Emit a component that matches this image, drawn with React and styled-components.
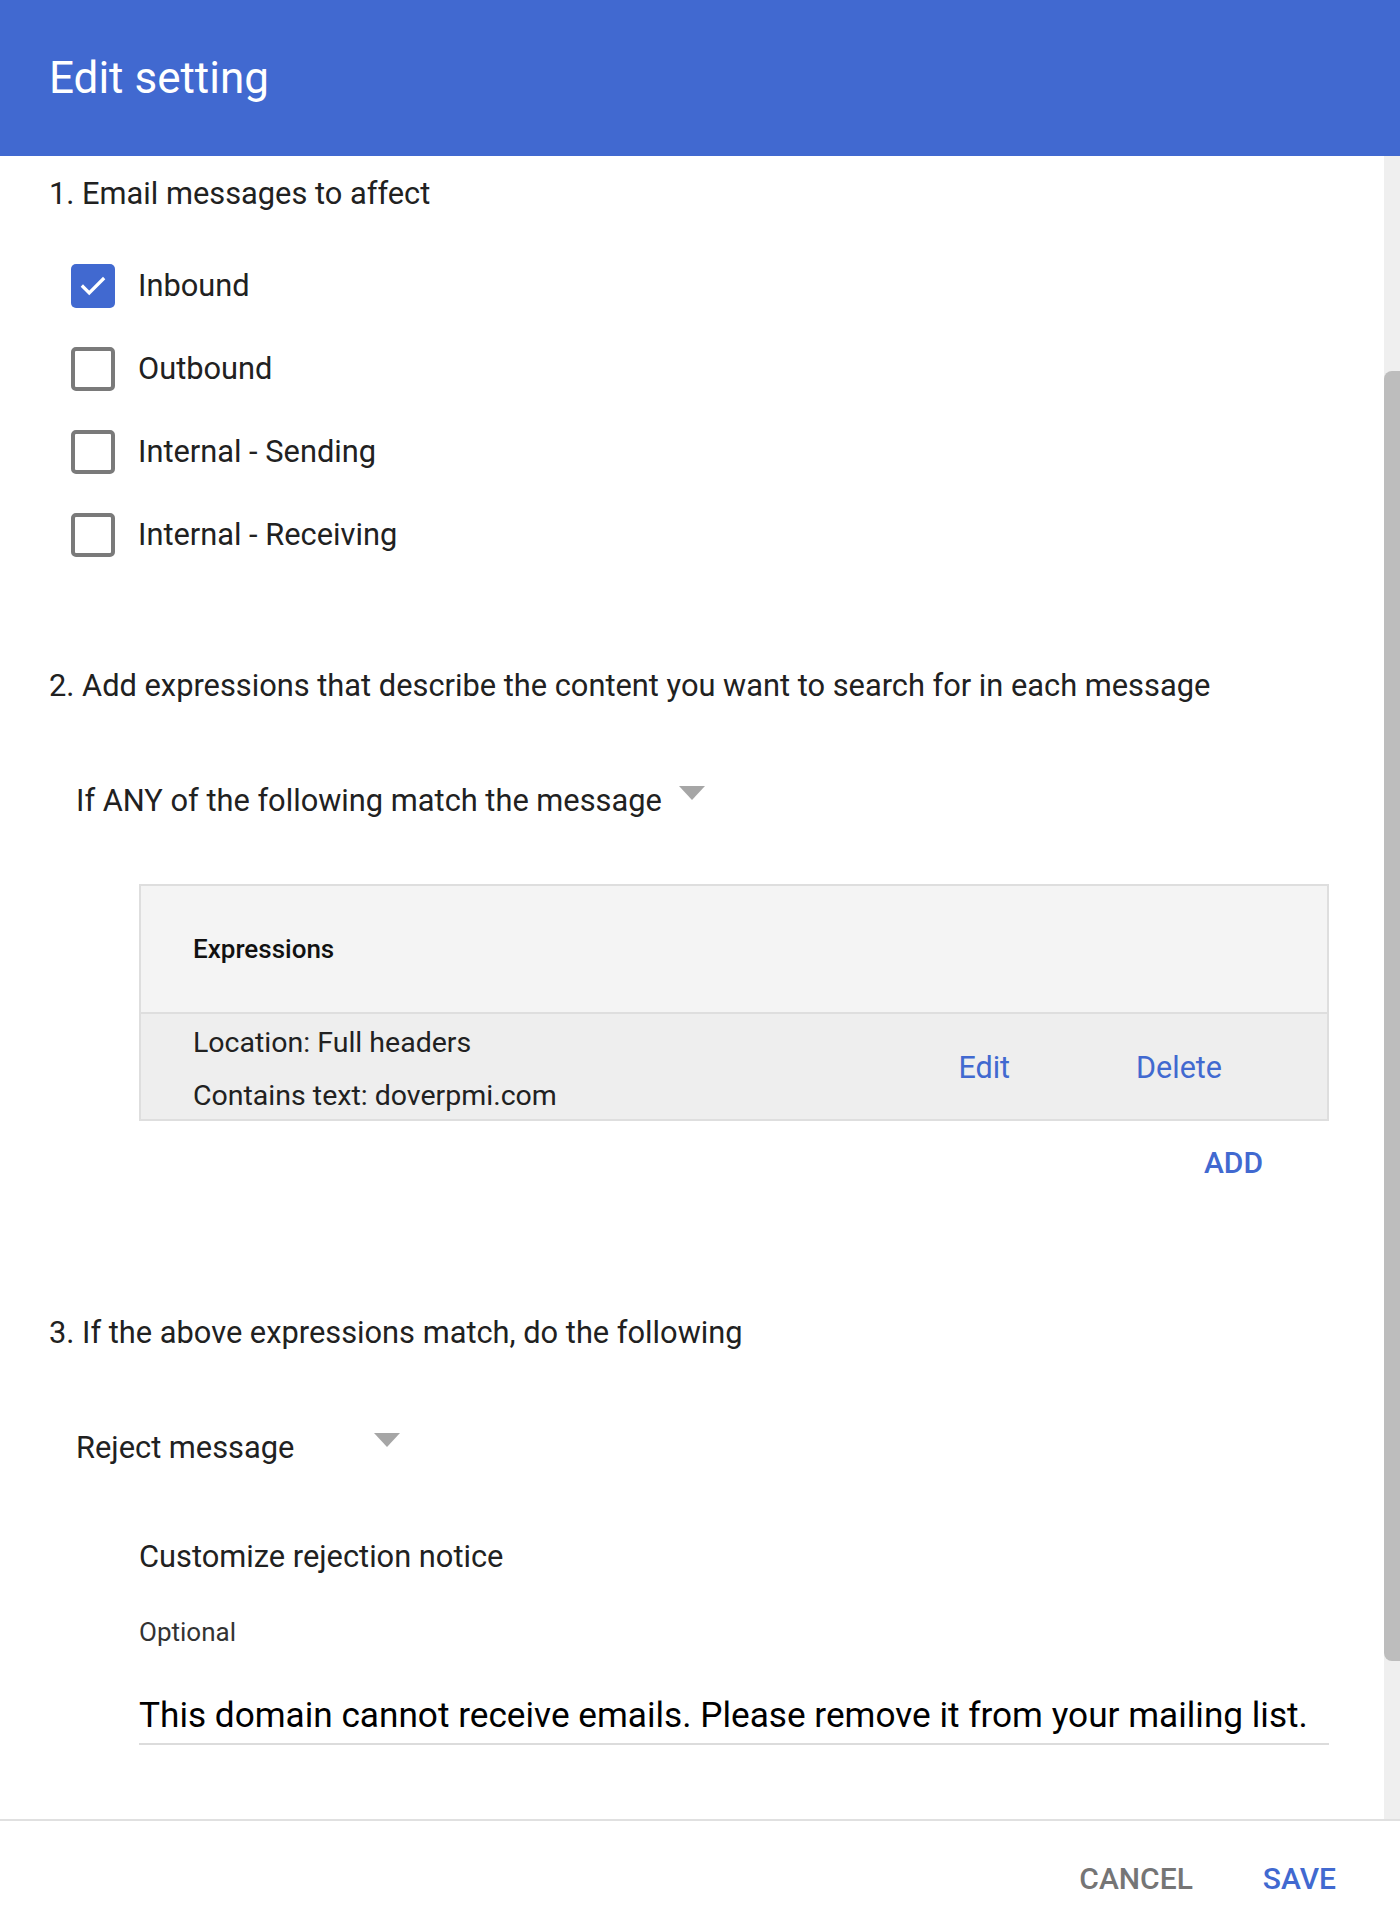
import React from "react";
import styled, { createGlobalStyle } from "styled-components";

const Global = createGlobalStyle`
  html, body { margin: 0; padding: 0; background: #fff; }
  body { font-family: Roboto, "Noto Sans", "Liberation Sans", sans-serif; color: #212121; }
  * { box-sizing: border-box; }
`;

const BLUE = "#4169d0";

const Dialog = styled.div`
  width: 1400px;
  height: 1926px;
  display: flex;
  flex-direction: column;
  background: #fff;
`;

const Header = styled.header`
  height: 156px;
  flex: none;
  background: ${BLUE};
  display: flex;
  align-items: center;
  padding-left: 49px;
`;

const Title = styled.h1`
  margin: 0;
  font-size: 44px;
  font-weight: 400;
  color: #fff;
`;

const Body = styled.div`
  flex: 1;
  display: flex;
  min-height: 0;
`;

const Content = styled.div`
  flex: 1;
  padding: 20px 55px 0 49px;
  display: flex;
  flex-direction: column;
`;

const ScrollTrack = styled.div`
  width: 16px;
  flex: none;
  background: #efefef;
  padding-top: 215px;
  padding-bottom: 158px;
  display: flex;
`;

const ScrollThumb = styled.div`
  flex: 1;
  background: #bdbdbd;
  border-radius: 8px 0 0 8px;
`;

const SectionTitle = styled.h2`
  margin: 0;
  margin-top: ${(p) => p.$gap || 0}px;
  font-size: 30.8px;
  font-weight: 400;
  line-height: 36px;
  color: #212121;
`;

const CheckList = styled.div`
  margin-top: 32px;
  display: flex;
  flex-direction: column;
`;

const CheckRow = styled.label`
  height: 83px;
  display: flex;
  align-items: center;
  gap: 23px;
  padding-left: 22px;
  font-size: 30.8px;
  color: #212121;
`;

const Box = styled.span`
  width: 44px;
  height: 44px;
  border-radius: 5px;
  flex: none;
  display: flex;
  align-items: center;
  justify-content: center;
  background: ${(p) => (p.$checked ? BLUE : "#fff")};
  border: ${(p) => (p.$checked ? "none" : "4px solid #7a7a7a")};
`;

const Select = styled.div`
  margin-top: ${(p) => p.$gap}px;
  margin-left: 27px;
  width: ${(p) => (p.$width ? `${p.$width}px` : "auto")};
  align-self: flex-start;
  display: flex;
  align-items: center;
  justify-content: space-between;
  gap: 17px;
  font-size: 30.8px;
  line-height: 36px;
  color: #212121;
`;

const Caret = styled.span`
  width: 0;
  height: 0;
  border-left: 13px solid transparent;
  border-right: 13px solid transparent;
  border-top: 14px solid #a6a6a6;
  transform: translateY(-8px);
`;

const Indented = styled.div`
  margin-left: 90px;
  display: flex;
  flex-direction: column;
`;

const Table = styled.div`
  margin-top: ${(p) => p.$gap}px;
  border: 2px solid #dedede;
  display: flex;
  flex-direction: column;
`;

const TableHead = styled.div`
  height: 128px;
  background: #f4f4f4;
  border-bottom: 2px solid #dedede;
  display: flex;
  align-items: center;
  padding-left: 52px;
  font-size: 26px;
  font-weight: 500;
  color: #111;
`;

const TableRow = styled.div`
  height: 105px;
  background: #eeeeee;
  display: flex;
  align-items: center;
  padding-left: 52px;
`;

const Detail = styled.div`
  flex: 1;
  display: flex;
  flex-direction: column;
  gap: 17px;
  padding-top: 5px;
  font-size: 28.5px;
  line-height: 36px;
  color: #212121;
`;

const RowActions = styled.div`
  display: flex;
  align-items: center;
  gap: 126px;
  padding-right: 105px;
  padding-top: 2px;
`;

const LinkButton = styled.button`
  background: none;
  border: none;
  padding: 0;
  font-family: inherit;
  font-size: 30.5px;
  font-weight: 400;
  color: ${BLUE};
  cursor: pointer;
`;

const AddRow = styled.div`
  display: flex;
  justify-content: flex-end;
  padding-right: 66px;
  margin-top: 24px;
`;

const TextButton = styled.button`
  background: none;
  border: none;
  padding: 0;
  font-family: inherit;
  font-size: 30px;
  font-weight: 500;
  line-height: 36px;
  color: ${(p) => (p.$muted ? "#757575" : BLUE)};
  cursor: pointer;
`;

const FieldLabel = styled.div`
  margin-top: ${(p) => p.$gap}px;
  font-size: ${(p) => p.$size}px;
  line-height: 36px;
  color: ${(p) => p.$color || "#212121"};
`;

const Input = styled.div`
  margin-top: 45px;
  border-bottom: 2px solid #dcdcdc;
  padding-bottom: 8px;
  font-size: 35.2px;
  line-height: 40px;
  color: #000;
  white-space: nowrap;
`;

const Footer = styled.footer`
  height: 107px;
  flex: none;
  border-top: 2px solid #e0e0e0;
  display: flex;
  align-items: center;
  justify-content: flex-end;
  gap: 70px;
  padding: 10px 64px 0 0;
`;

const Check = () => (
  <svg width="30" height="30" viewBox="0 0 24 24" fill="none">
    <path d="M4 12.5l5 5L20 6.5" stroke="#fff" strokeWidth="2.6" strokeLinecap="square" />
  </svg>
);

const directions = [
  { label: "Inbound", checked: true },
  { label: "Outbound", checked: false },
  { label: "Internal - Sending", checked: false },
  { label: "Internal - Receiving", checked: false },
];

export default function App() {
  return (
    <>
      <Global />
      <Dialog>
        <Header>
          <Title>Edit setting</Title>
        </Header>
        <Body>
          <Content>
            <SectionTitle>1. Email messages to affect</SectionTitle>
            <CheckList>
              {directions.map((d) => (
                <CheckRow key={d.label}>
                  <Box $checked={d.checked}>{d.checked && <Check />}</Box>
                  {d.label}
                </CheckRow>
              ))}
            </CheckList>

            <SectionTitle $gap={92}>
              2. Add expressions that describe the content you want to search for in each message
            </SectionTitle>
            <Select $gap={79}>
              If ANY of the following match the message
              <Caret />
            </Select>
            <Indented>
              <Table $gap={65}>
                <TableHead>Expressions</TableHead>
                <TableRow>
                  <Detail>
                    <span>Location: Full headers</span>
                    <span>Contains text: doverpmi.com</span>
                  </Detail>
                  <RowActions>
                    <LinkButton>Edit</LinkButton>
                    <LinkButton>Delete</LinkButton>
                  </RowActions>
                </TableRow>
              </Table>
              <AddRow>
                <TextButton>ADD</TextButton>
              </AddRow>
            </Indented>

            <SectionTitle $gap={134}>3. If the above expressions match, do the following</SectionTitle>
            <Select $gap={79} $width={324}>
              Reject message
              <Caret />
            </Select>
            <Indented>
              <FieldLabel $gap={73} $size={30.8}>Customize rejection notice</FieldLabel>
              <FieldLabel $gap={39} $size={26} $color="#333">Optional</FieldLabel>
              <Input>This domain cannot receive emails. Please remove it from your mailing list.</Input>
            </Indented>
          </Content>
          <ScrollTrack>
            <ScrollThumb />
          </ScrollTrack>
        </Body>
        <Footer>
          <TextButton $muted>CANCEL</TextButton>
          <TextButton>SAVE</TextButton>
        </Footer>
      </Dialog>
    </>
  );
}
